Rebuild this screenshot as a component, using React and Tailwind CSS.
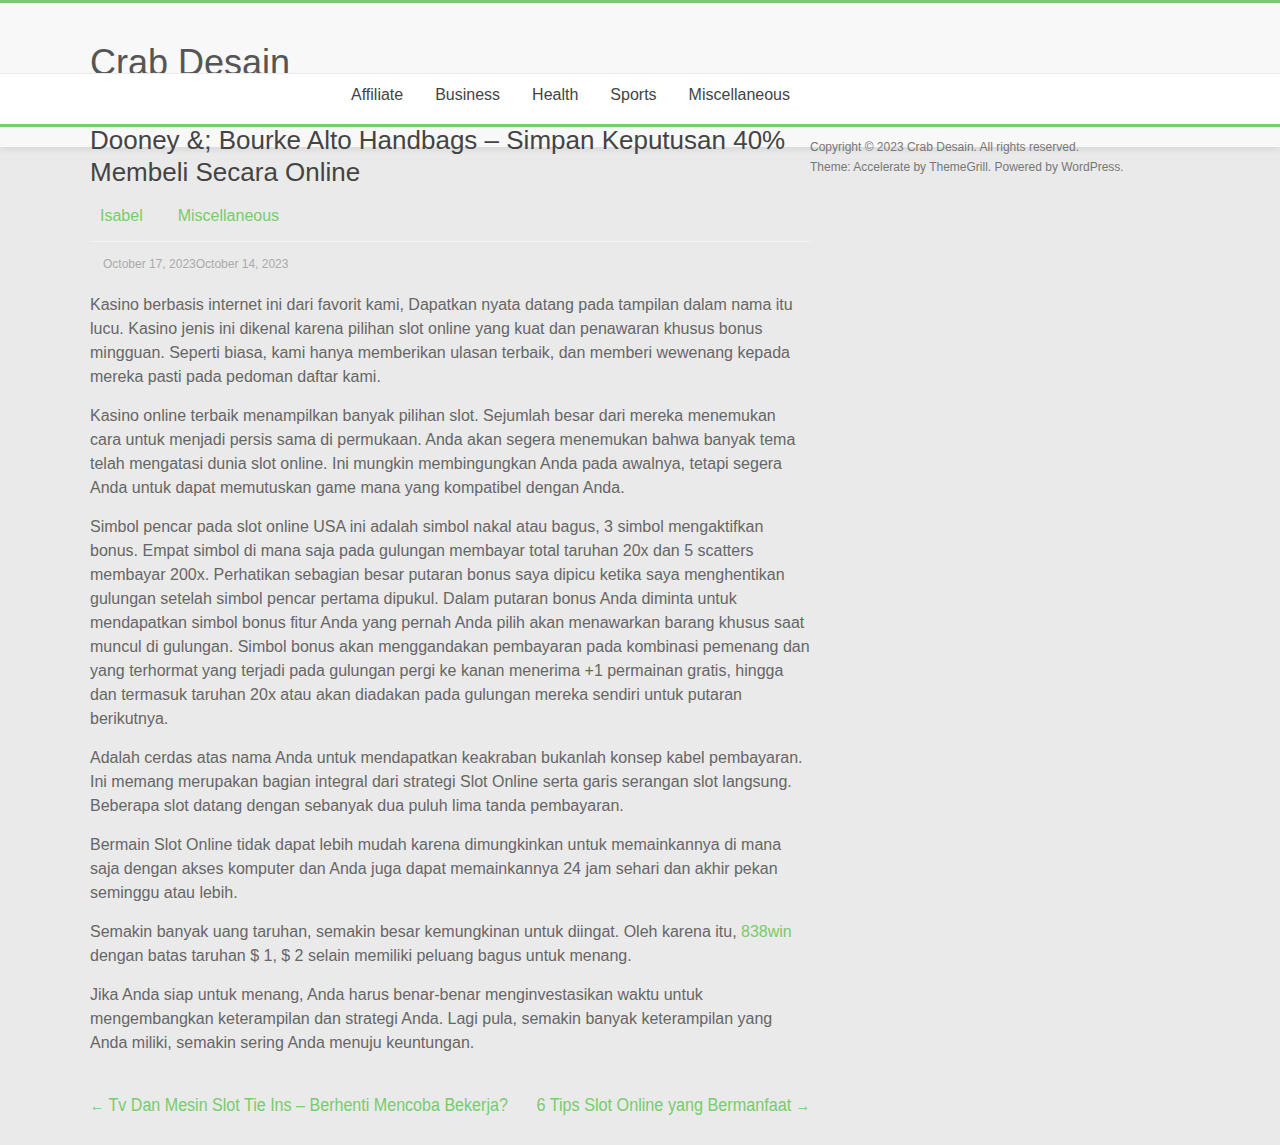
import React from 'react';

const navItems = ['Affiliate', 'Business', 'Health', 'Sports', 'Miscellaneous'];

const paragraphs = [
    'Kasino berbasis internet ini dari favorit kami, Dapatkan nyata datang pada tampilan dalam nama itu lucu. Kasino jenis ini dikenal karena pilihan slot online yang kuat dan penawaran khusus bonus mingguan. Seperti biasa, kami hanya memberikan ulasan terbaik, dan memberi wewenang kepada mereka pasti pada pedoman daftar kami.',
    'Kasino online terbaik menampilkan banyak pilihan slot. Sejumlah besar dari mereka menemukan cara untuk menjadi persis sama di permukaan. Anda akan segera menemukan bahwa banyak tema telah mengatasi dunia slot online. Ini mungkin membingungkan Anda pada awalnya, tetapi segera Anda untuk dapat memutuskan game mana yang kompatibel dengan Anda.',
    'Simbol pencar pada slot online USA ini adalah simbol nakal atau bagus, 3 simbol mengaktifkan bonus. Empat simbol di mana saja pada gulungan membayar total taruhan 20x dan 5 scatters membayar 200x. Perhatikan sebagian besar putaran bonus saya dipicu ketika saya menghentikan gulungan setelah simbol pencar pertama dipukul. Dalam putaran bonus Anda diminta untuk mendapatkan simbol bonus fitur Anda yang pernah Anda pilih akan menawarkan barang khusus saat muncul di gulungan. Simbol bonus akan menggandakan pembayaran pada kombinasi pemenang dan yang terhormat yang terjadi pada gulungan pergi ke kanan menerima +1 permainan gratis, hingga dan termasuk taruhan 20x atau akan diadakan pada gulungan mereka sendiri untuk putaran berikutnya.',
    'Adalah cerdas atas nama Anda untuk mendapatkan keakraban bukanlah konsep kabel pembayaran. Ini memang merupakan bagian integral dari strategi Slot Online serta garis serangan slot langsung. Beberapa slot datang dengan sebanyak dua puluh lima tanda pembayaran.',
    'Bermain Slot Online tidak dapat lebih mudah karena dimungkinkan untuk memainkannya di mana saja dengan akses komputer dan Anda juga dapat memainkannya 24 jam sehari dan akhir pekan seminggu atau lebih.',
];

export default function App() {
    return (
        <div className="min-h-[1145px] bg-[#eaeaea] text-[#666] font-['Liberation_Sans',Arial,sans-serif]">
            {/* Header */}
            <header className="border-t-[3px] border-[#77cc6d] bg-[#f8f8f8]">
                <div className="mx-auto w-[1100px] h-[70px]">
                    <h1 className="pt-[36px] text-[36px] leading-[48px] text-[#555] font-normal">Crab Desain</h1>
                </div>
                <nav className="relative bg-white border-t border-[#ebebeb] border-b-[3px] border-b-[#77cc6d]">
                    <ul className="mx-auto w-[1100px] h-[50px] flex items-start pt-[9px] pl-[245px]">
                        {navItems.map(item => (
                            <li key={item} className="px-4 text-[16px] leading-[24px] text-[#444]">{item}</li>
                        ))}
                    </ul>
                </nav>
                <div className="h-[20px] bg-[#f8f8f8] shadow-[0_3px_6px_rgba(0,0,0,0.08)]" />
            </header>

            {/* Main */}
            <main className="relative mt-[-23px] mx-auto w-[1100px] flex">
                <article className="w-[720px]">
                    <h2 className="text-[26px] leading-[32px] text-[#444] font-normal">
                        Dooney &amp;; Bourke Alto Handbags – Simpan Keputusan 40% Membeli Secara Online
                    </h2>
                    <div className="mt-[16px] pl-[10px] pb-[13px] border-b border-[#f4f4f4] flex text-[16px] leading-[24px] text-[#77cc6d]">
                        <span>Isabel</span>
                        <span className="ml-[35px]">Miscellaneous</span>
                    </div>
                    <div className="mt-[12px] pl-[13px] text-[12px] leading-[20px] text-[#aaa]">
                        October 17, 2023October 14, 2023
                    </div>
                    <div className="mt-[19px] text-[16px] leading-[24px]">
                        {paragraphs.map((p, i) => (
                            <p key={i} className="mb-[15px]">{p}</p>
                        ))}
                        <p className="mb-[15px]">
                            Semakin banyak uang taruhan, semakin besar kemungkinan untuk diingat. Oleh karena itu, <span className="text-[#77cc6d]">838win</span> dengan batas taruhan $ 1, $ 2 selain memiliki peluang bagus untuk menang.
                        </p>
                        <p className="mb-[15px]">
                            Jika Anda siap untuk menang, Anda harus benar-benar menginvestasikan waktu untuk mengembangkan keterampilan dan strategi Anda. Lagi pula, semakin banyak keterampilan yang Anda miliki, semakin sering Anda menuju keuntungan.
                        </p>
                    </div>
                    <div className="mt-[38px] flex justify-between text-[18px] leading-[24px] text-[#77cc6d]">
                        <div className="w-[417px] whitespace-nowrap">
                            <span className="inline-block origin-left scale-x-[0.893]"><span className="text-[16px]">←</span> Tv Dan Mesin Slot Tie Ins – Berhenti Mencoba Bekerja?</span>
                        </div>
                        <div className="w-[272px] whitespace-nowrap flex justify-end">
                            <span className="inline-block shrink-0 origin-right scale-x-[0.9]">6 Tips Slot Online yang Bermanfaat <span className="text-[16px]">→</span></span>
                        </div>
                    </div>
                </article>
                <aside className="pt-[13px] text-[12px] leading-[20px] text-[#777]">
                    <p>Copyright © 2023 Crab Desain. All rights reserved.</p>
                    <p>Theme: Accelerate by ThemeGrill. Powered by WordPress.</p>
                </aside>
            </main>
        </div>
    );
}
